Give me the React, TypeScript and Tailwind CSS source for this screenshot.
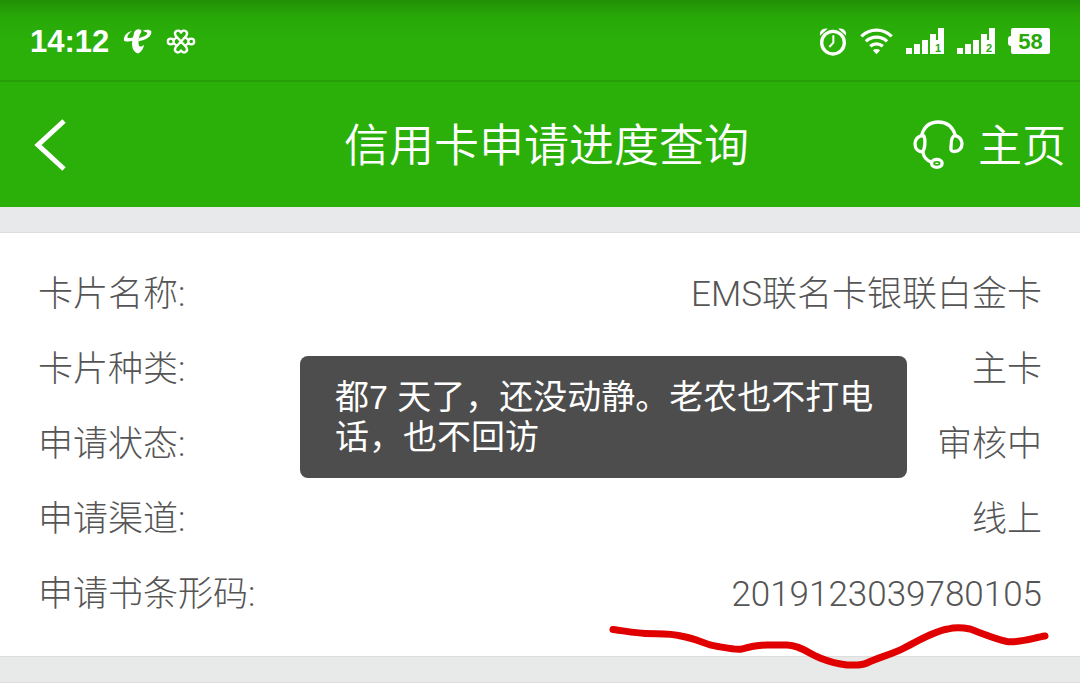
interface DetailRow {
  label: string;
  value: string;
}

const ROWS: DetailRow[] = [
  { label: '卡片名称:', value: 'EMS联名卡银联白金卡' },
  { label: '卡片种类:', value: '主卡' },
  { label: '申请状态:', value: '审核中' },
  { label: '申请渠道:', value: '线上' },
  { label: '申请书条形码:', value: '2019123039780105' },
];

function TelecomIcon() {
  return (
    <svg viewBox="0 0 88 78" className="h-[26px] w-[29px]" fill="currentColor" aria-hidden="true">
      <path d="M28 9C12 12 1 24 3 38C12 43 22 40 31 38L34 26C26 30 17 31 13 28C15 20 20 13 28 9Z" />
      <path d="M34 12C38 4 46 1 54 5C57 8 56 12 53 16C48 24 46 40 48 52C50 58 57 57 64 50C62 62 56 72 46 77C34 74 25 62 28 40Z" />
      <path d="M60 8C70 4 81 4 86 10C88 24 70 37 46 40L49 30C62 27 74 21 74 14C70 11 64 11 60 8Z" />
    </svg>
  );
}

function UnicomIcon() {
  return (
    <svg viewBox="0 0 90 76" className="h-[25px] w-[30px]" fill="none" stroke="currentColor" strokeWidth="7" strokeLinejoin="round" strokeLinecap="round" aria-hidden="true">
      <path d="M45 38L29 21C21 8 37 -2 45 11C53 -2 69 8 61 21Z" />
      <path d="M45 38L29 55C21 68 37 78 45 65C53 78 69 68 61 55Z" />
      <path d="M22 33L31 26M22 43L31 50M68 33L59 26M68 43L59 50" />
      <circle cx="14" cy="38" r="9" />
      <circle cx="76" cy="38" r="9" />
    </svg>
  );
}

function AlarmIcon() {
  return (
    <svg viewBox="0 0 84 87" className="h-[29px] w-7" fill="none" stroke="currentColor" aria-hidden="true">
      <path d="M3 26C1 12 10 2 26 5Z" fill="currentColor" stroke="none" />
      <path d="M81 26C83 12 74 2 58 5Z" fill="currentColor" stroke="none" />
      <circle cx="42" cy="47" r="34" strokeWidth="10" />
      <path d="M43 25V47L31 60" strokeWidth="6" />
    </svg>
  );
}

function WifiIcon() {
  return (
    <svg viewBox="0 0 100 84" className="h-7 w-[33px]" fill="none" stroke="currentColor" strokeWidth="10" aria-hidden="true">
      <path d="M4 28C30 3 70 3 96 28" />
      <path d="M18 43C36 26 64 26 82 43" />
      <path d="M31 58C42 48 58 48 69 58" />
      <path d="M39 70C45 65 55 65 61 70L50 82Z" fill="currentColor" stroke="none" />
    </svg>
  );
}

function SignalIcon({ sim }: { sim: number }) {
  return (
    <svg viewBox="0 0 38 26" className="h-[26px] w-[38px]" fill="currentColor" aria-hidden="true">
      <path d="M0 20H6V26H0ZM8 16H14V26H8ZM16 12H22V26H16ZM24 6H30V12H32V0H38V26H24Z" />
      <text x="32" y="24" textAnchor="middle" className="fill-[#28a80a] font-['Liberation_Sans',sans-serif] text-[11px] font-bold">
        {sim}
      </text>
    </svg>
  );
}

function HeadsetIcon() {
  return (
    <svg viewBox="0 0 152 148" className="h-[49px] w-[51px]" fill="none" stroke="currentColor" strokeWidth="10" strokeLinecap="round" aria-hidden="true">
      <path d="M25 46C33 18 51 6 76 6S118 19 127 46" />
      <path d="M27 47C13 48 5 60 5 72C5 86 14 96 28 96C36 86 37 58 32 48Z" />
      <path d="M125 47C139 48 147 60 147 72C147 86 137 96 121 95C113 95 113 89 114 80C114 66 116 49 125 47Z" />
      <path d="M29 97C31 112 39 122 55 127" />
      <ellipse cx="71" cy="131" rx="16" ry="12" />
      <path d="M68 131H74" strokeWidth="4" />
    </svg>
  );
}

function StatusBar() {
  return (
    <div className="flex h-20 items-center justify-between bg-linear-to-b from-[#219006] via-[#28a808] via-20% to-[#2ab009] to-50% px-[30px] pt-[2px]">
      <div className="flex items-center gap-[14px]">
        <time className="pt-[2px] font-['Liberation_Sans',sans-serif] text-[31px] font-bold">14:12</time>
        <TelecomIcon />
        <UnicomIcon />
      </div>
      <div className="flex items-center gap-[13px]">
        <AlarmIcon />
        <WifiIcon />
        <SignalIcon sim={1} />
        <SignalIcon sim={2} />
        <div className="flex items-center">
          <span className="h-[10px] w-[3px] rounded-l-sm bg-white" />
          <span className="flex h-[26px] w-[39px] items-center justify-center rounded-xs bg-white font-['Liberation_Sans',sans-serif] text-[22px] font-bold text-[#28a80a]">
            58
          </span>
        </div>
      </div>
    </div>
  );
}

function Header() {
  return (
    <header className="flex h-[125px] items-center justify-between px-[14px]">
      <button type="button" aria-label="返回" className="flex h-16 w-[166px] items-center pl-5">
        <svg viewBox="0 0 32 52" className="h-[52px] w-8" fill="none" stroke="currentColor" strokeWidth="5" aria-hidden="true">
          <path d="M30 2L4 26L30 50" />
        </svg>
      </button>
      <h1 className="pt-1 text-[45px] leading-none font-[350]">信用卡申请进度查询</h1>
      <a href="#home" className="flex items-center gap-[14px] text-[44px] leading-none font-[350]">
        <HeadsetIcon />
        <span className="pt-1">主页</span>
      </a>
    </header>
  );
}

export default function App() {
  return (
    <div className="min-h-screen bg-white font-['Liberation_Sans','Noto_Sans_CJK_SC',sans-serif]">
      <div className="bg-[#2ab009] text-white">
        <StatusBar />
        <div className="h-[2px] bg-[#279f0a]" />
        <Header />
      </div>

      <div className="h-[26px] border-b border-[#dcdddd] bg-[#e8e9ea]" />

      <main className="relative bg-white px-[38px] pt-6 pb-6">
        <dl className="font-['Roboto','Noto_Sans_CJK_SC',sans-serif] text-[35px] font-light text-[#555555]">
          {ROWS.map((row) => (
            <div key={row.label} className="flex h-[75px] items-center justify-between leading-none">
              <dt>{row.label}</dt>
              <dd>{row.value}</dd>
            </div>
          ))}
        </dl>

        {/* Comment bubble */}
        <p className="absolute top-[123px] left-[300px] w-[607px] rounded-lg bg-[#4d4d4d] py-[21px] pr-6 pl-[35px] text-[34px] leading-10 text-white">
          都7 天了，还没动静。老农也不打电话，也不回访
        </p>

        {/* Hand-drawn underline */}
        <svg
          viewBox="608 620 444 52"
          className="absolute top-[387px] right-7 h-[52px] w-[444px]"
          fill="none"
          stroke="#e00000"
          strokeWidth="7"
          strokeLinecap="round"
          strokeLinejoin="round"
          aria-hidden="true"
        >
          <path d="M613 629.5C625 631 635 633 645 633.5C660 634 670 633 681 636C698 639 706 645 718 646.500C727 648 735 650 742 649C752 646 759 645 767 645H787C799 645 808 653 820 658C830 662 837 664 847 665C854 665 861 666 867 663C879 657 894 654 906 647C920 640 934 631 948 629C955 627 963 627.500 970 629C984 634 995 639 1007 641.500C1018 643 1033 638 1045 636" />
        </svg>
      </main>

      <div className="h-[27px] border-y border-[#dcdddd] bg-[#e8e9e9]" />
    </div>
  );
}
